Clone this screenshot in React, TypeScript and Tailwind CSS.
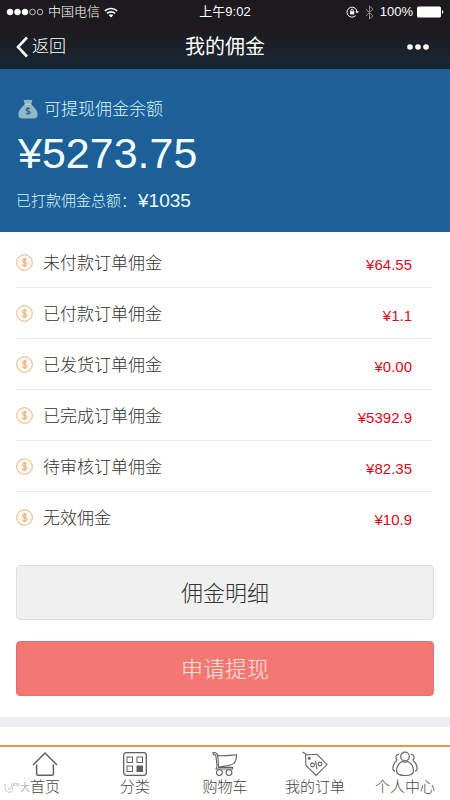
import type { ReactNode } from 'react';

const commissions = [
  { label: '未付款订单佣金', amount: '¥64.55' },
  { label: '已付款订单佣金', amount: '¥1.1' },
  { label: '已发货订单佣金', amount: '¥0.00' },
  { label: '已完成订单佣金', amount: '¥5392.9' },
  { label: '待审核订单佣金', amount: '¥82.35' },
  { label: '无效佣金', amount: '¥10.9' },
];

function WifiIcon() {
  return (
    <svg width="14" height="11" viewBox="0 0 14 11" fill="none" stroke="white" strokeWidth="1.7" aria-hidden="true">
      <path d="M0.8 4a9 9 0 0 1 12.4 0" />
      <path d="M3 6.4a5.8 5.8 0 0 1 8 0" />
      <path d="M7 10.6 4.8 8.2a3.3 3.3 0 0 1 4.4 0Z" fill="white" stroke="none" />
    </svg>
  );
}

function RotationLockIcon() {
  return (
    <svg width="13" height="12" viewBox="0 0 13 12" fill="none" stroke="white" aria-hidden="true">
      <path d="M9.6 9.6A5 5 0 1 1 11 6" />
      <path d="M9.3 5.2h3.5L11 7.4Z" fill="white" stroke="none" />
      <rect x="4" y="5.2" width="4.2" height="3.2" fill="white" stroke="none" />
      <path d="M4.9 5.4V4.3a1.2 1.2 0 0 1 2.4 0v1.1" strokeWidth="0.9" />
    </svg>
  );
}

function BluetoothIcon() {
  return (
    <svg width="9" height="15" viewBox="0 0 9 15" fill="none" stroke="#8b8b8f" aria-hidden="true">
      <path d="M0.8 4 8 10.8 4.5 14V1L8 4.2 0.8 11" />
    </svg>
  );
}

function BatteryIcon() {
  return (
    <svg width="27" height="12" viewBox="0 0 27 12" fill="white" aria-hidden="true">
      <rect x="0" y="0.5" width="24" height="11" rx="1.5" />
      <path d="M25 4c1.6.4 1.6 3.6 0 4Z" />
    </svg>
  );
}

function MoneyBagIcon() {
  return (
    <svg width="20" height="20" viewBox="0 0 20 20" aria-hidden="true">
      <path d="M5.5 0.8c1.5.6 2.5-.4 4.5 0 2-.4 3 .6 4.5 0L13.2 5H6.8Z" fill="#8fb9c9" />
      <path d="M6.8 5.8h6.4c3 1.9 6.4 6 6.4 9.6 0 3-1.8 4-4.5 4H4.9c-2.7 0-4.5-1-4.5-4 0-3.6 3.4-7.7 6.4-9.6Z" fill="#8fb9c9" />
      <path d="M6.5 5.4h7" stroke="#c0c7a4" strokeWidth="1.2" />
      <path
        d="M12 10c-.4-.9-3.9-1.1-3.9.7 0 1.8 4 1 4 2.9 0 1.8-3.6 1.7-4.3.5M10 8v8"
        fill="none"
        stroke="#35617f"
        strokeWidth="1.1"
      />
    </svg>
  );
}

function CoinIcon() {
  return (
    <svg width="17" height="17" viewBox="0 0 17 17" fill="none" stroke="#e5b282" aria-hidden="true">
      <circle cx="8.5" cy="8.5" r="7.8" fill="#fffaf0" />
      <path d="M11 6.3c-.6-1.5-5-1.5-5 .4 0 2 5.2 1.3 5.2 3.5 0 2-4.7 2-5.4.3M8.1 3.8v9.4M9.2 3.8v9.4" />
    </svg>
  );
}

function HomeIcon() {
  return (
    <svg width="26" height="26" viewBox="0 0 26 26" fill="none" stroke="#606060" strokeWidth="1.5" aria-hidden="true">
      <path d="M1 14 13 2l12 12" />
      <path d="M4.6 13.5v9.2c0 1 .5 1.6 1.6 1.6h13.6c1.1 0 1.6-.6 1.6-1.6v-9.2" />
    </svg>
  );
}

function CategoryIcon() {
  return (
    <svg width="26" height="26" viewBox="0 0 26 26" fill="none" stroke="#606060" aria-hidden="true">
      <rect x="1.7" y="1.7" width="22.6" height="22.6" rx="2.5" strokeWidth="1.3" />
      <rect x="5" y="6" width="5.5" height="5.5" />
      <rect x="15" y="6" width="5.5" height="5.5" />
      <rect x="5" y="15" width="5.5" height="5.5" />
      <rect x="15" y="15" width="5.5" height="5.5" fill="#606060" />
    </svg>
  );
}

function CartIcon() {
  return (
    <svg width="26" height="26" viewBox="0 0 26 26" fill="none" stroke="#606060" strokeWidth="1.1" aria-hidden="true">
      <path d="M5.8 4.6C11 5.2 18 4.3 24.5 3.8c0 3.2-.8 6.8-2.6 8.6-2.4 1.9-6 2.2-9.3 2.7L7.4 16" />
      <path d="M5.8 4.6C5.3 2 3.2 1.2.9 1.6L1.6 3.6c1.7-.2 2.3.6 2.4 2l1 9c.1 1.6-.7 2.3-1 3.4H20.5v-1.6H6.6L5.8 4.6" />
      <circle cx="7.4" cy="21.6" r="2.9" />
      <circle cx="17" cy="21.6" r="2.9" />
    </svg>
  );
}

function TagIcon() {
  return (
    <svg width="26" height="26" viewBox="0 0 26 26" fill="none" stroke="#686868" strokeWidth="1.1" aria-hidden="true">
      <path d="M3.5 4 15 3.3 25 13.6 14.2 24.5 4 14.5Z" />
      <path d="M0.5 1.5c1.8-.6 2 1.5 4.5 2" />
      <circle cx="7.2" cy="7.2" r="1" fill="#686868" />
      <circle cx="10.5" cy="14" r="1.9" />
      <circle cx="18" cy="13" r="1.9" />
      <path d="m13.5 9.8 1.5 8.5" />
    </svg>
  );
}

function PeopleIcon() {
  return (
    <svg width="26" height="26" viewBox="0 0 26 26" fill="none" stroke="#686868" strokeWidth="1.2" aria-hidden="true">
      <circle cx="13" cy="5.5" r="4.3" />
      <path d="M10 10.4c-3.4 2-5.7 6.3-5.3 10.5.3 2.6 3.8 3.6 8.3 3.6s8-1 8.3-3.6c.4-4.2-1.9-8.5-5.3-10.5-1.8.9-4.2.9-6 0Z" />
      <path d="M7.2 3.4C3.6 3 2.8 7.3 5.4 9.3M18.8 3.4c3.6-.4 4.4 3.9 1.8 5.9" />
      <path d="M5 9.6c-2.6 1.8-4.2 5.2-4.2 8.2 0 1.3.8 2 2.2 2.3M21 9.6c2.6 1.8 4.2 5.2 4.2 8.2 0 1.3-.8 2-2.2 2.3" />
    </svg>
  );
}

const tabs: { label: string; icon: ReactNode }[] = [
  { label: '首页', icon: <HomeIcon /> },
  { label: '分类', icon: <CategoryIcon /> },
  { label: '购物车', icon: <CartIcon /> },
  { label: '我的订单', icon: <TagIcon /> },
  { label: '个人中心', icon: <PeopleIcon /> },
];

function StatusBar() {
  return (
    <div className="grid h-6 grid-cols-[1fr_auto_1fr] items-center px-1.5 text-[13px] leading-6">
      <div className="flex items-center gap-1">
        <svg width="38" height="8" viewBox="0 0 38 8" fill="white" stroke="white" strokeWidth="0.7" aria-hidden="true">
          <circle cx="4" cy="4" r="2.9" />
          <circle cx="11.5" cy="4" r="2.9" />
          <circle cx="19" cy="4" r="2.9" />
          <circle cx="26.5" cy="4" r="2.8" fill="none" />
          <circle cx="34" cy="4" r="2.8" fill="none" />
        </svg>
        <span className="font-light">中国电信</span>
        <WifiIcon />
      </div>
      <span>上午9:02</span>
      <div className="flex items-center justify-end gap-1.5">
        <RotationLockIcon />
        <BluetoothIcon />
        <span className="flex items-center gap-1">
          100%
          <BatteryIcon />
        </span>
      </div>
    </div>
  );
}

// faint publisher mark in the bottom left corner
function Watermark() {
  return (
    <div
      aria-hidden="true"
      className="pointer-events-none absolute bottom-0.5 left-1 flex items-center text-[10px] leading-5 text-[#b8b8b8]"
    >
      <svg width="16" height="12" viewBox="0 0 17 12" fill="none" stroke="#c4c4c4">
        <path d="M1 1.5c0 4-.5 8 4 9 4 .4 5-3 3.5-6M4 5.5l2 2.5 2.5-4" />
        <circle cx="9" cy="2.5" r="1.3" />
        <circle cx="12" cy="2" r="1.3" />
        <circle cx="15" cy="2.5" r="1.3" />
      </svg>
      大
    </div>
  );
}

export default function App() {
  return (
    <div className="flex min-h-screen flex-col bg-[#fefefe] font-['Liberation_Sans','Noto_Sans_CJK_SC',sans-serif] text-[#333]">
      <header className="bg-linear-to-b from-[#1d1a1e] from-40% to-[#162733] text-white">
        <StatusBar />
        <div className="grid h-[45px] grid-cols-[1fr_auto_1fr] items-center px-4">
          <button type="button" className="flex items-center gap-1 justify-self-start text-[17px] font-light">
            <svg width="12" height="22" viewBox="0 0 12 22" fill="none" stroke="white" strokeWidth="2.6" aria-hidden="true">
              <path d="M11 1.5 2 11l9 9.5" />
            </svg>
            返回
          </button>
          <h1 className="text-xl">我的佣金</h1>
          <button type="button" aria-label="更多" className="justify-self-end pr-1">
            <svg width="24" height="8" viewBox="0 0 24 8" fill="white" aria-hidden="true">
              <circle cx="4" cy="4" r="2.8" />
              <circle cx="12" cy="4" r="2.8" />
              <circle cx="20" cy="4" r="2.8" />
            </svg>
          </button>
        </div>
      </header>

      <section className="h-[163px] bg-[#1d6098] px-4 pt-7 text-[#d9f5fb]">
        <div className="flex h-6 items-center gap-1.5 pl-0.5 text-[17px] font-light">
          <MoneyBagIcon />
          <span className="pt-0.5">可提现佣金余额</span>
        </div>
        <p className="pt-1 pl-0.5 text-[43px] leading-[56px] text-[#f0ffff]">¥5273.75</p>
        <p className="flex items-center gap-0.5 pt-1.5 text-[15px] leading-7 font-light">
          已打款佣金总额：
          <span className="text-[19px] text-[#e8fdff]">¥1035</span>
        </p>
      </section>

      <main>
        <ul className="pt-[5px] pr-[18px] pl-4">
          {commissions.map((item) => (
            <li
              key={item.label}
              className="flex h-[51px] items-center border-b border-[#ececec] last:border-transparent"
            >
              <CoinIcon />
              <span className="pt-1 pl-2.5 text-[17px] font-light">{item.label}</span>
              <span className="ml-auto pt-1.5 pr-5 text-[15px] text-[#d60c22]">{item.amount}</span>
            </li>
          ))}
        </ul>

        <div className="flex flex-col gap-[21px] px-4 pt-[22px] pb-[21px] text-[22px]">
          <button type="button" className="h-[55px] rounded-sm border border-[#dedede] bg-[#f0f0f0] pt-0.5 font-light">
            佣金明细
          </button>
          <button
            type="button"
            className="h-[55px] rounded-sm border border-[#df7478] bg-[#f37874] pt-0.5 font-light text-[#ffe3da]"
          >
            申请提现
          </button>
        </div>
        <div className="h-2.5 bg-[#eeecee]" />
      </main>

      <nav className="relative mt-auto border-t-2 border-[#df9c45] bg-white">
        <Watermark />
        <ul className="relative grid h-[53px] grid-cols-5">
          {tabs.map((tab) => (
            <li key={tab.label}>
              <a href="#" className="flex flex-col items-center pt-1 text-[15px] leading-5 font-light text-[#444]">
                {tab.icon}
                {tab.label}
              </a>
            </li>
          ))}
        </ul>
      </nav>
    </div>
  );
}
